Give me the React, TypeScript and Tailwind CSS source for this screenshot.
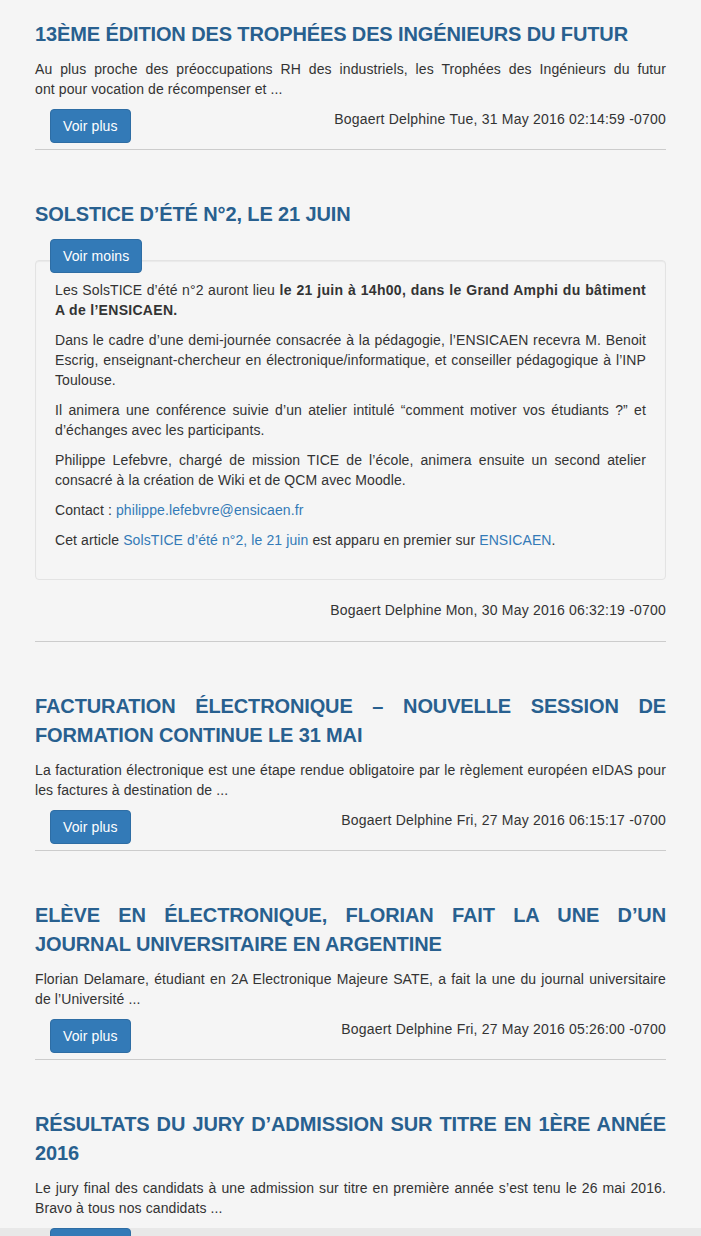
const font = { fontFamily: '"Liberation Sans", Arial, sans-serif' }

type Post = {
    title: string
    excerpt: string
    date: string
}

const posts: Post[] = [
    {
        title: "13ème édition des Trophées des Ingénieurs du futur",
        excerpt: "Au plus proche des préoccupations RH des industriels, les Trophées des Ingénieurs du futur ont\u00a0pour vocation de récompenser et ...",
        date: "Bogaert Delphine Tue, 31 May 2016 02:14:59 -0700",
    },
]

const morePosts: Post[] = [
    {
        title: "Facturation électronique – nouvelle session de formation continue le 31 mai",
        excerpt: "La facturation électronique est une étape rendue obligatoire par le règlement européen eIDAS pour les factures à destination de ...",
        date: "Bogaert Delphine Fri, 27 May 2016 06:15:17 -0700",
    },
    {
        title: "Elève en électronique, Florian fait la une d’un journal universitaire en Argentine",
        excerpt: "Florian Delamare, étudiant en 2A Electronique Majeure SATE, a fait la une du journal universitaire de l’Université ...",
        date: "Bogaert Delphine Fri, 27 May 2016 05:26:00 -0700",
    },
    {
        title: "Résultats du jury d’admission sur titre en 1ère année 2016",
        excerpt: "Le jury final des candidats à une admission sur titre en première année s’est tenu le 26 mai 2016. Bravo à tous nos candidats ...",
        date: "Bogaert Delphine Thu, 26 May 2016 08:02:41 -0700",
    },
]

function Title({ children }: { children: string }) {
    return (
        <h3 className="mt-[20px] mb-[10px] text-[20px] leading-[29px] font-bold uppercase text-justify tracking-[-0.12px] text-[#28608f]">
            {children}
        </h3>
    )
}

function Button({ label }: { label: string }) {
    return (
        <button className="relative z-10 self-start ml-[15px] h-[34px] px-[12px] rounded-[4px] border border-[#2e6da4] bg-[#337ab7] text-white text-[14px] leading-[20px]">
            {label}
        </button>
    )
}

function Summary({ post, last }: { post: Post; last?: boolean }) {
    return (
        <article className="flex flex-col">
            <Title>{post.title}</Title>
            <p className="mb-[10px] text-justify">{post.excerpt}</p>
            <div className="flex justify-between items-start">
                <Button label="Voir plus" />
                <span className="tracking-[0.2px]">{post.date}</span>
            </div>
            {!last && <hr className="mt-[6px] mb-[30px] border-0 border-t border-[#cccccc]" />}
        </article>
    )
}

function Link({ children }: { children: string }) {
    return <a href="#" className="text-[#337ab7]">{children}</a>
}

export default function App() {
    return (
        <div className="min-h-screen bg-[#f5f5f5] text-[#333333] text-[14px] leading-[20px] tracking-[0.1px]" style={font}>
            <div className="flex flex-col px-[35px] pb-[40px]">
                {posts.map((p) => <Summary key={p.title} post={p} />)}

                <article className="flex flex-col">
                    <Title>Solstice d’été n°2, le 21 juin</Title>
                    <Button label="Voir moins" />
                    <div className="-mt-[13px] p-[19px] rounded-[4px] border border-[#e3e3e3] bg-[#f5f5f5] shadow-[inset_0_1px_1px_rgba(0,0,0,0.05)] text-justify">
                        <p className="mb-[10px]">
                            Les SolsTICE d’été n°2 auront lieu <strong className="tracking-[0.3px]">le 21 juin à 14h00, dans le Grand Amphi du bâtiment A de l’ENSICAEN.</strong>
                        </p>
                        <p className="mb-[10px]">
                            Dans le cadre d’une demi-journée consacrée à la pédagogie, l’ENSICAEN recevra M. Benoit Escrig, enseignant-chercheur en électronique/informatique, et conseiller pédagogique à l’INP Toulouse.
                        </p>
                        <p className="mb-[10px]">
                            Il animera une conférence suivie d’un atelier intitulé “comment motiver vos étudiants ?” et d’échanges avec les participants.
                        </p>
                        <p className="mb-[10px]">
                            Philippe Lefebvre, chargé de mission TICE de l’école, animera ensuite un second atelier consacré à la création de Wiki et de QCM avec Moodle.
                        </p>
                        <p className="mb-[10px]">
                            Contact : <Link>philippe.lefebvre@ensicaen.fr</Link>
                        </p>
                        <p className="mb-[10px]">
                            Cet article <Link>SolsTICE d’été n°2, le 21 juin</Link> est apparu en premier sur <Link>ENSICAEN</Link>.
                        </p>
                    </div>
                    <div className="mt-[20px] text-right tracking-[0.2px]">Bogaert Delphine Mon, 30 May 2016 06:32:19 -0700</div>
                    <hr className="mt-[21px] mb-[30px] border-0 border-t border-[#cccccc]" />
                </article>

                {morePosts.map((p, i) => (
                    <Summary key={p.title} post={p} last={i === morePosts.length - 1} />
                ))}
            </div>
            <div className="fixed bottom-0 left-0 right-0 h-[8px] bg-[#e8e8e8]" />
        </div>
    )
}
